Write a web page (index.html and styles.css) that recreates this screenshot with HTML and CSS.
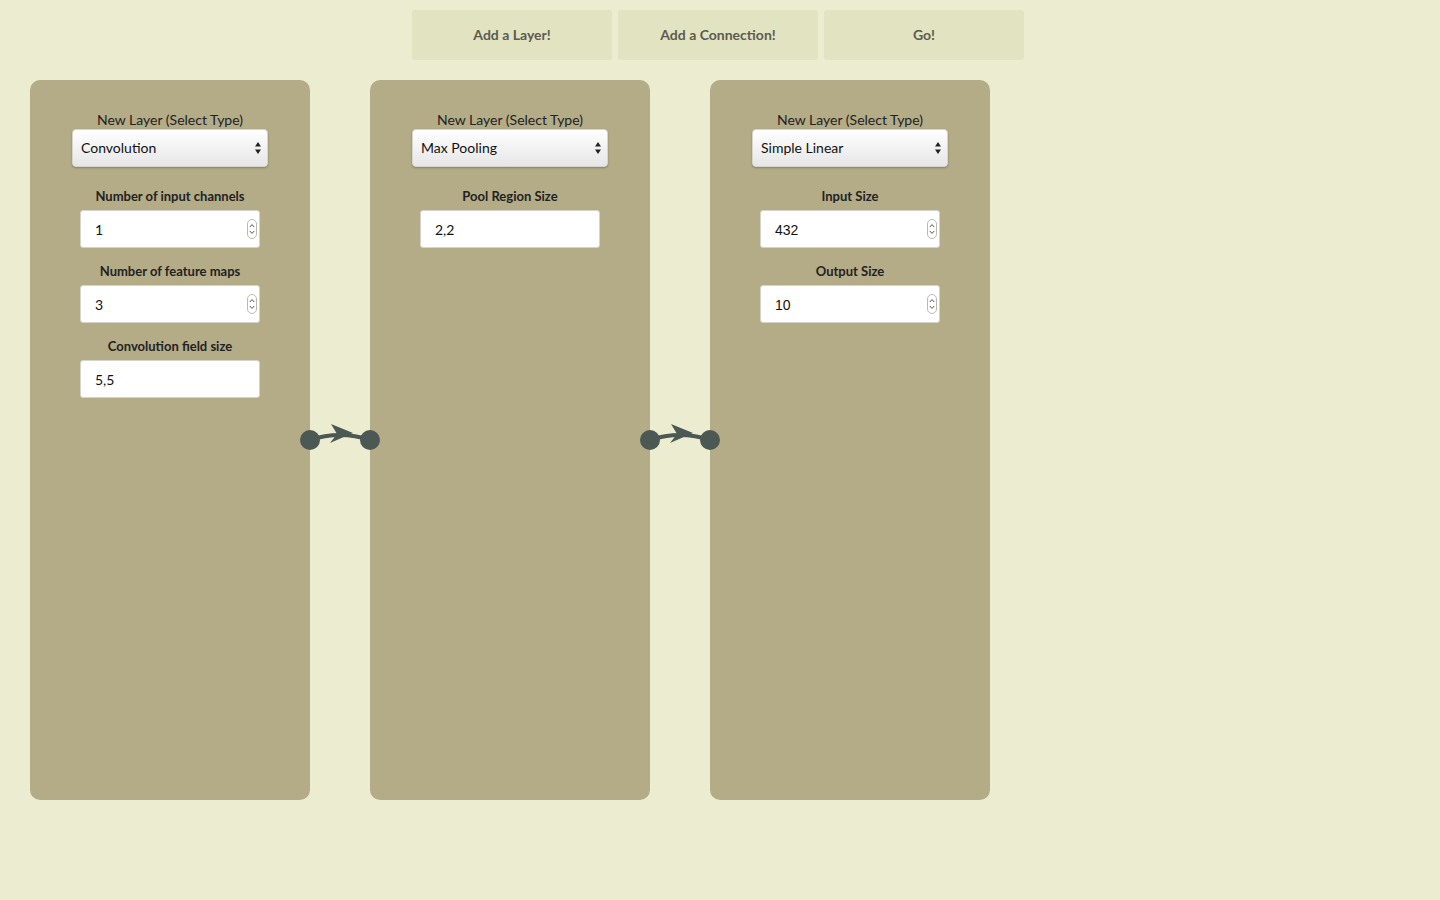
FILE: index.html
```html
<!DOCTYPE html>
<html lang="en">
<head>
    <meta charset="UTF-8">
    <meta name="viewport" content="width=device-width, initial-scale=1.0">
    <title>Network Builder</title>
    <link rel="stylesheet" href="styles.css">
</head>
<body>
    <div class="toolbar">
        <button class="tool-btn">Add a Layer!</button>
        <button class="tool-btn">Add a Connection!</button>
        <button class="tool-btn">Go!</button>
    </div>

    <div class="network">

        <div class="layer">
            <label class="type-label">New Layer (Select Type)</label>
            <select class="type-select">
                <option>Convolution</option>
                <option>Max Pooling</option>
                <option>Simple Linear</option>
            </select>
            <div class="field first">
                <label>Number of input channels</label>
                <div class="num-wrap">
                    <input type="number" value="1">
                    <svg class="spin" width="10" height="20" viewBox="0 0 10 20"><rect x="0.5" y="0.5" width="9" height="19" rx="4.5" fill="#fff" stroke="#b9b9b0"/><path d="M2.8 8 L5 5.6 L7.2 8 M2.8 12 L5 14.4 L7.2 12" fill="none" stroke="#555" stroke-width="1"/></svg>
                </div>
            </div>
            <div class="field">
                <label>Number of feature maps</label>
                <div class="num-wrap">
                    <input type="number" value="3">
                    <svg class="spin" width="10" height="20" viewBox="0 0 10 20"><rect x="0.5" y="0.5" width="9" height="19" rx="4.5" fill="#fff" stroke="#b9b9b0"/><path d="M2.8 8 L5 5.6 L7.2 8 M2.8 12 L5 14.4 L7.2 12" fill="none" stroke="#555" stroke-width="1"/></svg>
                </div>
            </div>
            <div class="field">
                <label>Convolution field size</label>
                <input type="text" value="5,5">
            </div>
        </div>

        <div class="link">
            <svg width="80" height="40" viewBox="0 0 80 40">
                <path d="M10 20 Q40 10 70 20" fill="none" stroke="#4b5854" stroke-width="4"/>
                <polygon points="31,4 53,13 30,23 37,14" fill="#4b5854"/>
                <circle cx="10" cy="20" r="10" fill="#4b5854"/>
                <circle cx="70" cy="20" r="10" fill="#4b5854"/>
            </svg>
        </div>

        <div class="layer">
            <label class="type-label">New Layer (Select Type)</label>
            <select class="type-select">
                <option>Convolution</option>
                <option selected>Max Pooling</option>
                <option>Simple Linear</option>
            </select>
            <div class="field first">
                <label>Pool Region Size</label>
                <input type="text" value="2,2">
            </div>
        </div>

        <div class="link">
            <svg width="80" height="40" viewBox="0 0 80 40">
                <path d="M10 20 Q40 10 70 20" fill="none" stroke="#4b5854" stroke-width="4"/>
                <polygon points="31,4 53,13 30,23 37,14" fill="#4b5854"/>
                <circle cx="10" cy="20" r="10" fill="#4b5854"/>
                <circle cx="70" cy="20" r="10" fill="#4b5854"/>
            </svg>
        </div>

        <div class="layer linear">
            <label class="type-label">New Layer (Select Type)</label>
            <select class="type-select">
                <option>Convolution</option>
                <option>Max Pooling</option>
                <option selected>Simple Linear</option>
            </select>
            <div class="field first">
                <label>Input Size</label>
                <div class="num-wrap">
                    <input type="number" value="432">
                    <svg class="spin" width="10" height="20" viewBox="0 0 10 20"><rect x="0.5" y="0.5" width="9" height="19" rx="4.5" fill="#fff" stroke="#b9b9b0"/><path d="M2.8 8 L5 5.6 L7.2 8 M2.8 12 L5 14.4 L7.2 12" fill="none" stroke="#555" stroke-width="1"/></svg>
                </div>
            </div>
            <div class="field">
                <label>Output Size</label>
                <div class="num-wrap">
                    <input type="number" value="10">
                    <svg class="spin" width="10" height="20" viewBox="0 0 10 20"><rect x="0.5" y="0.5" width="9" height="19" rx="4.5" fill="#fff" stroke="#b9b9b0"/><path d="M2.8 8 L5 5.6 L7.2 8 M2.8 12 L5 14.4 L7.2 12" fill="none" stroke="#555" stroke-width="1"/></svg>
                </div>
            </div>
        </div>

    </div>
</body>
</html>
```

FILE: styles.css
```css
body {
    margin: 0;
    background-color: #ecedd0;
    font-family: Lato, "Open Sans", sans-serif;
    color: #222;
}

.toolbar {
    display: flex;
    justify-content: center;
    gap: 6px;
    padding-top: 10px;
    padding-right: 4px;
}

.tool-btn {
    width: 200px;
    height: 50px;
    padding-bottom: 2px;
    border: none;
    border-radius: 3px;
    background-color: #e2e3c1;
    color: #5b5b52;
    font-family: Lato, sans-serif;
    font-size: 14px;
    font-weight: 700;
}

.network {
    display: flex;
    margin-top: 20px;
    padding-left: 30px;
}

.layer {
    width: 280px;
    height: 720px;
    box-sizing: border-box;
    padding-top: 32px;
    background-color: #b4ab87;
    border-radius: 10px;
    display: flex;
    flex-direction: column;
    align-items: center;
    flex-shrink: 0;
}

.type-label {
    font-size: 14px;
    line-height: 16px;
    color: #222;
}

.type-select {
    margin-top: 1px;
    width: 196px;
    height: 38px;
    padding: 0 20px 2px 8px;
    -webkit-appearance: none;
    appearance: none;
    border: 1px solid #d6d6d0;
    border-radius: 4px;
    background-color: #fff;
    background-image: url("data:image/svg+xml;utf8,<svg xmlns='http://www.w3.org/2000/svg' width='8' height='14'><path d='M4 1 L7 5.5 L1 5.5 Z M4 13 L7 8.5 L1 8.5 Z' fill='%23222'/></svg>"), linear-gradient(#ffffff, #e6e6e6);
    background-repeat: no-repeat, no-repeat;
    background-position: right 5px center, 0 0;
    box-shadow: 0 1px 2px rgba(0, 0, 0, 0.25);
    font-family: Lato, sans-serif;
    font-size: 14px;
    color: #111;
}

.field {
    display: flex;
    flex-direction: column;
    align-items: center;
    margin-top: 15px;
}

.field.first {
    margin-top: 21px;
}

.field label {
    font-size: 13px;
    font-weight: 700;
    line-height: 16px;
    margin-bottom: 6px;
    color: #222;
}

.field input {
    width: 180px;
    height: 38px;
    box-sizing: border-box;
    padding: 0 15px 0 14px;
    border: 1px solid #d4d4cc;
    border-radius: 3px;
    background-color: #fff;
    font-family: Lato, sans-serif;
    font-size: 14px;
    color: #111;
    -moz-appearance: textfield;
}

.field input::-webkit-inner-spin-button,
.field input::-webkit-outer-spin-button {
    -webkit-appearance: none;
    margin: 0;
}

.layer.linear .field input {
    padding-top: 2px;
    font-family: "Liberation Sans", Arial, sans-serif;
}

.num-wrap {
    position: relative;
}

.spin {
    position: absolute;
    right: 3px;
    top: 9px;
}

.link {
    flex: 0 0 60px;
    min-width: 0;
    align-self: center;
    position: relative;
    z-index: 1;
}

.link svg {
    display: block;
    margin: 0 -10px;
}
```
